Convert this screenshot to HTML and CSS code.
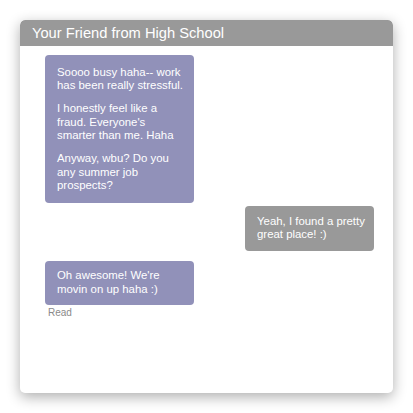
FILE: index.html
```html
<!DOCTYPE html>
<html>
<head>
<meta charset="utf-8">
<link rel="stylesheet" href="styles.css">
</head>
<body>
<div class="chat">
  <div class="chat-header">Your Friend from High School</div>
  <div class="chat-body">
    <div class="msg msg-received msg-first">
      <div class="bubble bubble-received bubble-long">
        <p>Soooo busy haha-- work has been really stressful.</p>
        <p>I honestly feel like a fraud. Everyone's smarter than me. Haha</p>
        <p>Anyway, wbu? Do you any summer job prospects?</p>
      </div>
    </div>
    <div class="msg msg-sent">
      <div class="bubble bubble-sent">
        <p>Yeah, I found a pretty great place! :)</p>
      </div>
    </div>
    <div class="msg msg-received msg-last">
      <div class="bubble bubble-received">
        <p>Oh awesome! We're movin on up haha :)</p>
      </div>
      <div class="status">Read</div>
    </div>
  </div>
</div>
</body>
</html>
```
FILE: styles.css
```css
html, body {
  margin: 0;
  padding: 0;
  background: #ffffff;
}
body {
  padding: 20px;
  font-family: "Liberation Sans", Arial, Helvetica, sans-serif;
}
.chat {
  width: 373px;
  height: 373px;
  background: #ffffff;
  border-radius: 5px;
  box-shadow: 0 4px 14px rgba(0, 0, 0, 0.32);
  display: flex;
  flex-direction: column;
  overflow: hidden;
}
.chat-header {
  height: 26px;
  box-sizing: border-box;
  padding: 1px 12px 0;
  line-height: 25px;
  background: #999999;
  color: #ffffff;
  font-size: 14.7px;
  border-radius: 5px 5px 0 0;
}
.chat-body {
  display: flex;
  flex-direction: column;
  padding: 9px 19px 0 25px;
}
.msg {
  display: flex;
  flex-direction: column;
}
.msg-received {
  align-items: flex-start;
}
.msg-sent {
  align-items: flex-end;
  margin-top: 3.5px;
}
.msg-last {
  margin-top: 10px;
}
.bubble {
  box-sizing: border-box;
  border-radius: 4px;
  color: #ffffff;
  font-size: 11.4px;
  line-height: 13.7px;
  padding: 8.5px 9px 8.5px 12px;
}
.bubble p {
  margin: 0;
}
.bubble p + p {
  margin-top: 9px;
}
.bubble-received {
  width: 149px;
  background: #9191b9;
}
.bubble-long {
  padding-top: 10.5px;
  padding-bottom: 9.5px;
}
.bubble-sent {
  width: 129px;
  padding-right: 7px;
  background: #999999;
}
.status {
  margin: 2px 0 0 3px;
  font-size: 10px;
  line-height: 12px;
  color: #8a8a8a;
}
```
